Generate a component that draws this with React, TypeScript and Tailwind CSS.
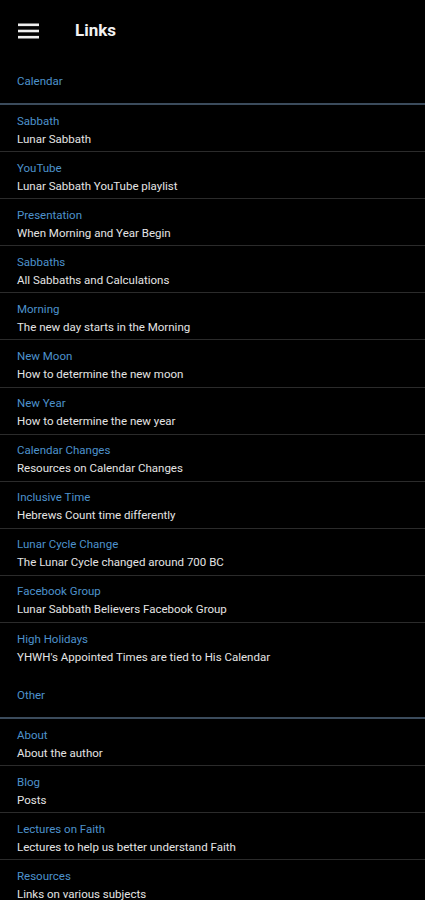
import React from 'react';

type Item = { title: string; desc: string };

const calendar: Item[] = [
  { title: 'Sabbath', desc: 'Lunar Sabbath' },
  { title: 'YouTube', desc: 'Lunar Sabbath YouTube playlist' },
  { title: 'Presentation', desc: 'When Morning and Year Begin' },
  { title: 'Sabbaths', desc: 'All Sabbaths and Calculations' },
  { title: 'Morning', desc: 'The new day starts in the Morning' },
  { title: 'New Moon', desc: 'How to determine the new moon' },
  { title: 'New Year', desc: 'How to determine the new year' },
  { title: 'Calendar Changes', desc: 'Resources on Calendar Changes' },
  { title: 'Inclusive Time', desc: 'Hebrews Count time differently' },
  { title: 'Lunar Cycle Change', desc: 'The Lunar Cycle changed around 700 BC' },
  { title: 'Facebook Group', desc: 'Lunar Sabbath Believers Facebook Group' },
  { title: 'High Holidays', desc: "YHWH's Appointed Times are tied to His Calendar" },
];

const other: Item[] = [
  { title: 'About', desc: 'About the author' },
  { title: 'Blog', desc: 'Posts' },
  { title: 'Lectures on Faith', desc: 'Lectures to help us better understand Faith' },
  { title: 'Resources', desc: 'Links on various subjects' },
];

const Section = ({ name, items, first }: { name: string; items: Item[]; first?: boolean }) => (
  <section>
    <div className={`px-[17px] ${first ? 'pt-[13px] pb-[14px]' : 'pt-[17px] pb-[14px]'} border-b-2 border-[#3b4b5c]`}>
      <div className="text-[11.5px] leading-[16px] text-[#4d92cc]">{name}</div>
    </div>
    {items.map((it, i) => (
      <div
        key={it.title}
        className={`px-[17px] pt-[6.5px] h-[47.1px] ${i < items.length - 1 ? 'border-b border-[#2b2b2b]' : ''}`}
      >
        <div className="text-[11.5px] leading-[18px] text-[#4d92cc]">{it.title}</div>
        <div className="text-[11.5px] leading-[18px] text-[#e4e4e4]">{it.desc}</div>
      </div>
    ))}
  </section>
);

const App: React.FC = () => {
  return (
    <div className="min-h-screen bg-black text-white" style={{ fontFamily: 'Roboto, "Liberation Sans", sans-serif' }}>
      <header className="h-[60px] flex items-center px-[18px]">
        <svg width="21" height="16" viewBox="0 0 21 16" className="text-[#eeeeee] mt-[1px]">
          <rect x="0" y="0.5" width="21" height="2.6" fill="currentColor" />
          <rect x="0" y="6.7" width="21" height="2.6" fill="currentColor" />
          <rect x="0" y="12.9" width="21" height="2.6" fill="currentColor" />
        </svg>
        <h1 className="ml-[36px] mt-[1px] text-[17px] font-bold text-[#f2f2f2]">Links</h1>
      </header>
      <Section name="Calendar" items={calendar} first />
      <Section name="Other" items={other} />
    </div>
  );
};

export default App;
